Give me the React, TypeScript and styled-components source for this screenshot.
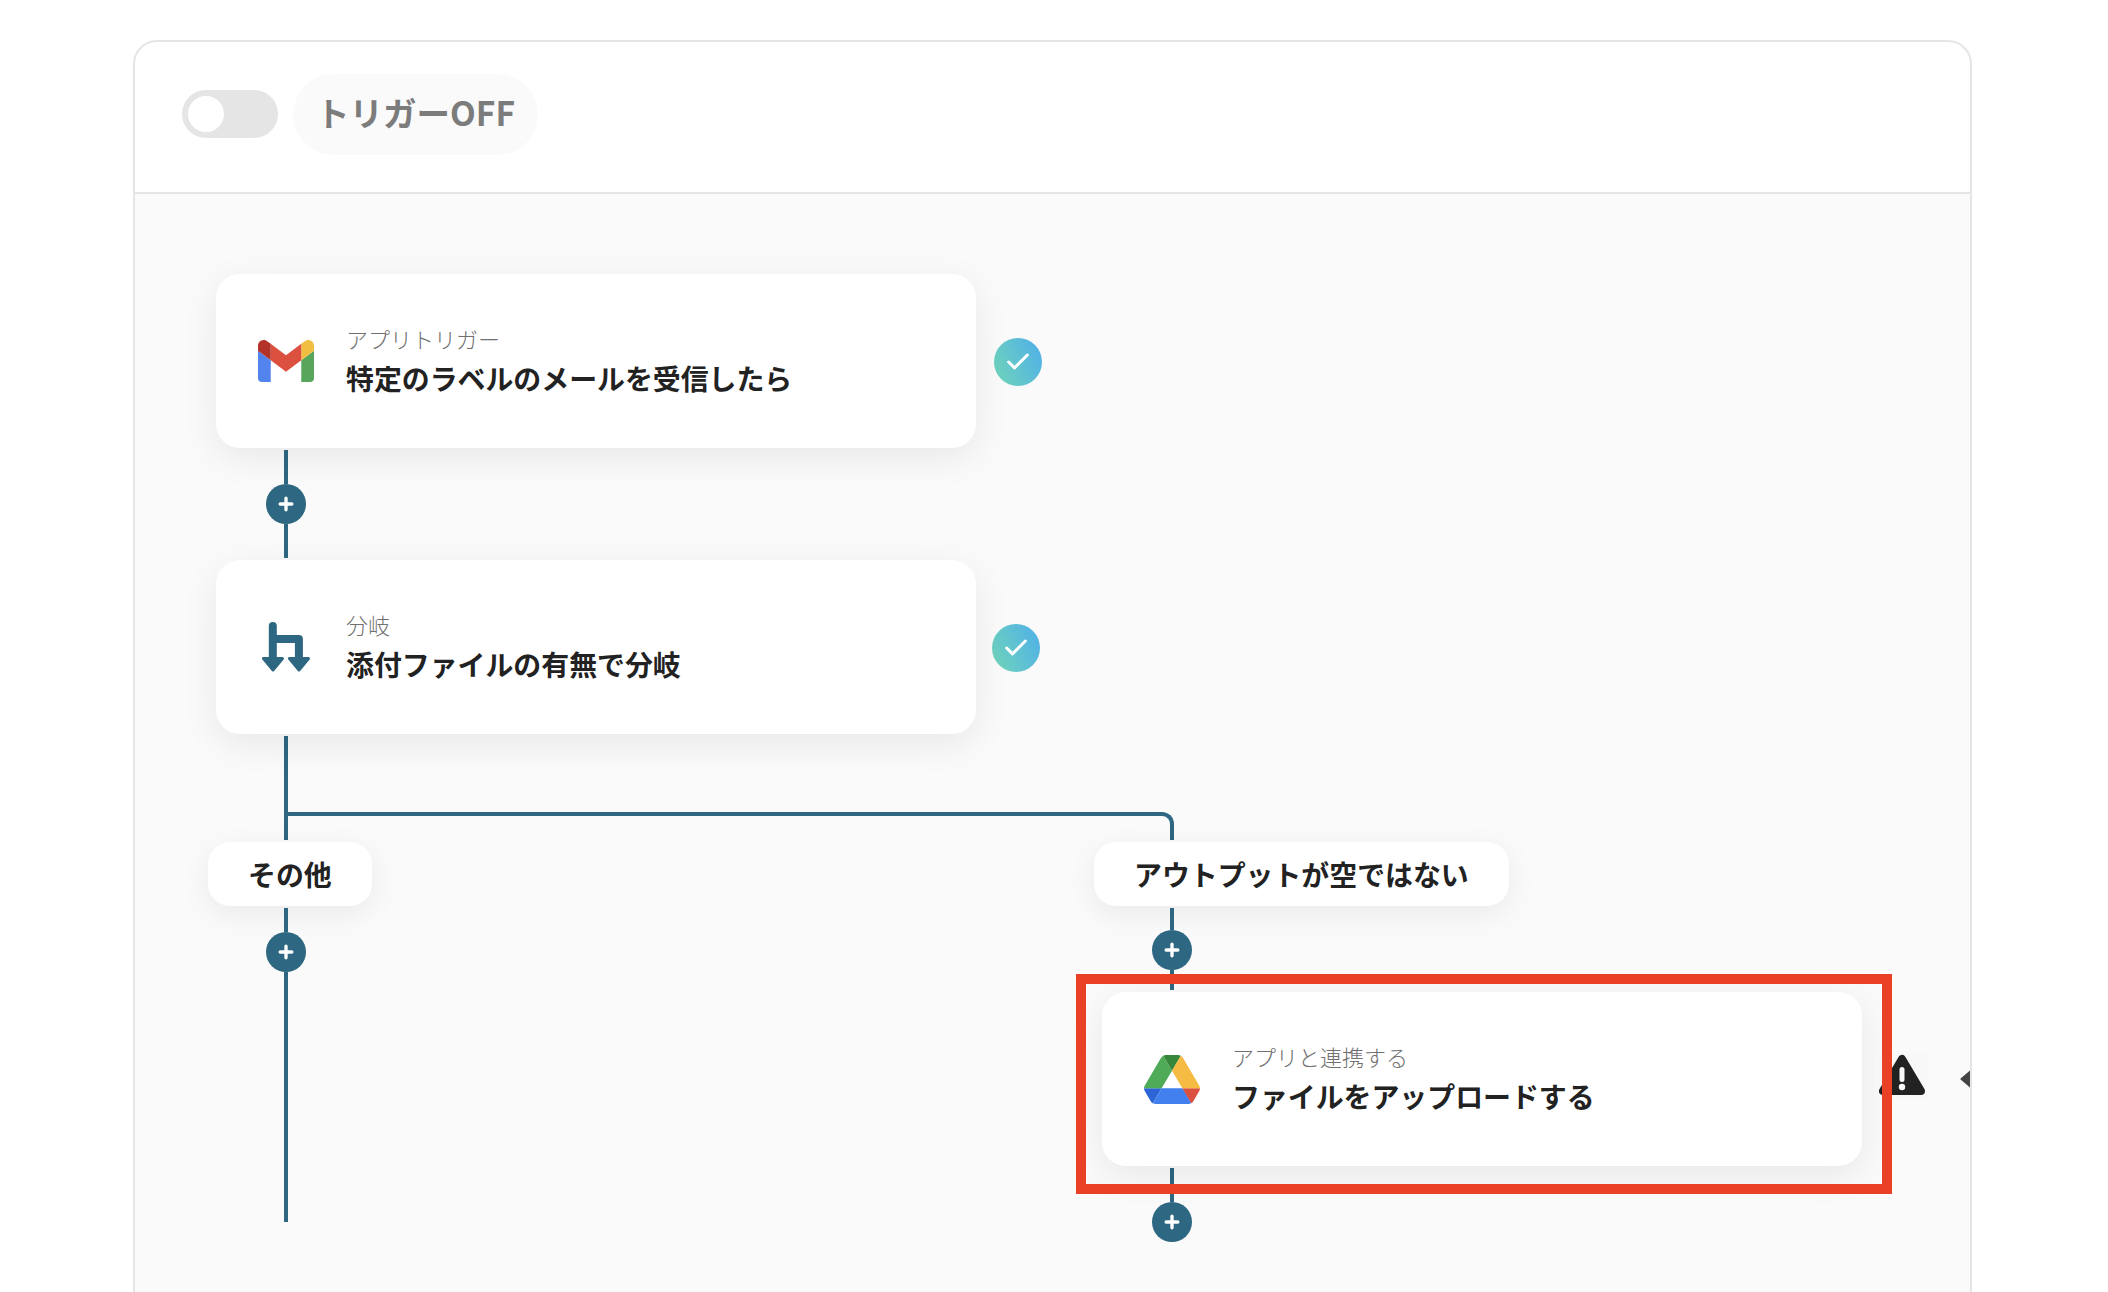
import React from "react";
import styled, { createGlobalStyle } from "styled-components";
import { Check, Plus } from "lucide-react";

const LINE_COLOR = "#2e6781";

const GlobalStyle = createGlobalStyle`
  html, body {
    margin: 0;
    padding: 0;
    background: #ffffff;
  }
  * {
    box-sizing: border-box;
  }
`;

const Page = styled.div`
  width: 2108px;
  height: 1292px;
  padding: 40px 136px 0 133px;
  overflow: hidden;
  font-family: "Noto Sans CJK JP", "Noto Sans", sans-serif;
`;

const Panel = styled.div`
  width: 1839px;
  height: 1320px;
  border: 2px solid #e5e5e5;
  border-radius: 24px;
  overflow: hidden;
  background: #ffffff;
`;

const Header = styled.div`
  height: 152px;
  display: flex;
  align-items: center;
  gap: 15px;
  padding: 0 0 6px 47px;
  border-bottom: 2px solid #e5e5e5;
`;

const Toggle = styled.div`
  width: 96px;
  height: 48px;
  padding: 6px;
  border-radius: 24px;
  background: #e5e5e5;
`;

const ToggleKnob = styled.div`
  width: 36px;
  height: 36px;
  border-radius: 50%;
  background: #ffffff;
`;

const TriggerPill = styled.div`
  width: 245px;
  height: 81px;
  display: flex;
  align-items: center;
  padding: 0 0 5px 23px;
  border-radius: 41px;
  background: #fafafa;
  color: #7c7c7c;
  font-size: 33.5px;
  font-weight: 700;
  white-space: nowrap;
`;

const Canvas = styled.div`
  height: 1200px;
  padding: 80px 0 0 81px;
  background: #fafafa;
`;

const NodeRow = styled.div<{ $indent?: number; $top?: number }>`
  display: flex;
  align-items: center;
  margin-left: ${(p) => p.$indent ?? 0}px;
  margin-top: ${(p) => p.$top ?? 0}px;
`;

const Card = styled.div`
  position: relative;
  flex-shrink: 0;
  width: 760px;
  height: 174px;
  display: flex;
  align-items: center;
  border-radius: 24px;
  background: #ffffff;
  box-shadow: 0 10px 36px rgba(0, 0, 0, 0.075);
`;

const IconSlot = styled.div`
  width: 56px;
  height: 56px;
  margin: 0 32px 0 42px;
  display: flex;
  align-items: center;
  justify-content: center;
  flex-shrink: 0;
`;

const CardText = styled.div`
  display: flex;
  flex-direction: column;
  gap: 4px;
  padding-bottom: 3px;
`;

const CardKind = styled.div`
  font-size: 22px;
  line-height: 32px;
  font-weight: 300;
  color: #707070;
`;

const CardTitle = styled.div`
  font-size: 27.9px;
  line-height: 40px;
  font-weight: 700;
  color: #222222;
`;

const StatusDot = styled.div<{ $gap: number }>`
  width: 48px;
  height: 48px;
  margin: 2px 0 0 ${(p) => p.$gap}px;
  flex-shrink: 0;
  display: flex;
  align-items: center;
  justify-content: center;
  border-radius: 50%;
  color: #ffffff;
  background: linear-gradient(65deg, #72d6b8 0%, #4eaeea 100%);
`;

const Rail = styled.div<{ $indent: number }>`
  width: 40px;
  margin: 2px 0 0 ${(p) => p.$indent}px;
  display: flex;
  flex-direction: column;
  align-items: center;
`;

const Line = styled.div<{ $h: number }>`
  width: 4px;
  height: ${(p) => p.$h}px;
  background: ${LINE_COLOR};
`;

const AddButton = styled.div`
  width: 40px;
  height: 40px;
  flex-shrink: 0;
  display: flex;
  align-items: center;
  justify-content: center;
  border-radius: 50%;
  background: ${LINE_COLOR};
  color: #ffffff;
`;

const Elbow = styled.div`
  width: 890px;
  height: 28px;
  margin-left: 68px;
  border: 4px solid ${LINE_COLOR};
  border-bottom: none;
  border-top-right-radius: 12px;
`;

const Branches = styled.div`
  display: flex;
  margin: 2px 0 0 -8px;
`;

const BranchColumn = styled.div<{ $width: number }>`
  flex: 0 0 ${(p) => p.$width}px;
  width: ${(p) => p.$width}px;
  display: flex;
  flex-direction: column;
  align-items: flex-start;
`;

const BranchLabel = styled.div`
  height: 64px;
  display: flex;
  align-items: center;
  padding: 0 40px;
  border-radius: 22px;
  background: #ffffff;
  box-shadow: 0 8px 30px rgba(0, 0, 0, 0.065);
  font-size: 27.9px;
  font-weight: 700;
  color: #222222;
  white-space: nowrap;
`;

const Highlight = styled.div`
  position: absolute;
  top: -18px;
  left: -26px;
  right: -30px;
  bottom: -28px;
  z-index: 2;
  border: 10px solid #ea4026;
  pointer-events: none;
`;

const WarningBox = styled.div`
  width: 48px;
  height: 46px;
  margin: -8px 0 0 17px;
  flex-shrink: 0;
  background: #f8f8f8;
`;

const Chevron = styled.svg`
  width: 20px;
  height: 20px;
  margin: 0 0 0 33px;
  flex-shrink: 0;
`;

const GmailLogo = () => (
  <svg width="56" height="42" viewBox="52 42 88 66" preserveAspectRatio="none">
    <path fill="#5383ec" d="M58 108h14V74L52 59v43c0 3.32 2.69 6 6 6" />
    <path fill="#58a65c" d="M120 108h14c3.32 0 6-2.69 6-6V59l-20 15" />
    <path fill="#f2be42" d="M120 48v26l20-15v-8c0-7.42-8.47-11.65-14.4-7.2" />
    <path fill="#dc5040" d="M72 74V48l24 18 24-18v26L96 92" />
    <path fill="#b3332a" d="M52 51v8l20 15V48l-5.6-4.2c-5.94-4.45-14.4-.22-14.4 7.2" />
  </svg>
);

const DriveLogo = () => (
  <svg width="56" height="49" viewBox="0 0 87.3 78" preserveAspectRatio="none">
    <path fill="#2d65d6" d="m6.6 66.85 3.85 6.65c.8 1.4 1.95 2.5 3.3 3.3l13.75-23.8h-27.5c0 1.55.4 3.1 1.2 4.5z" />
    <path fill="#4fab58" d="m43.65 25-13.75-23.8c-1.35.8-2.5 1.9-3.3 3.3l-25.4 44a9.06 9.06 0 0 0 -1.2 4.5h27.5z" />
    <path fill="#dc5040" d="m73.55 76.8c1.35-.8 2.5-1.9 3.3-3.3l1.6-2.75 7.65-13.25c.8-1.4 1.2-2.95 1.2-4.5h-27.502l5.852 11.5z" />
    <path fill="#37873a" d="m43.65 25 13.75-23.8c-1.35-.8-2.9-1.2-4.5-1.2h-18.5c-1.6 0-3.15.45-4.5 1.2z" />
    <path fill="#4180ee" d="m59.8 53h-32.3l-13.75 23.8c1.35.8 2.9 1.2 4.5 1.2h50.8c1.6 0 3.15-.45 4.5-1.2z" />
    <path fill="#f5bb42" d="m73.4 26.5-12.7-22c-.8-1.4-1.95-2.5-3.3-3.3l-13.75 23.8 16.15 28h27.45c0-1.55-.4-3.1-1.2-4.5z" />
  </svg>
);

const BranchIcon = () => (
  <svg width="48" height="50" viewBox="0 0 48 50">
    <path d="M10.8 4V38M10.8 17H36.9V38" fill="none" stroke={LINE_COLOR} strokeWidth="8" strokeLinecap="round" strokeLinejoin="round" />
    <path d="M1.5 36.5H20.5L11 48Z" fill={LINE_COLOR} stroke={LINE_COLOR} strokeWidth="3" strokeLinejoin="round" />
    <path d="M27.5 36.5H46.5L37 48Z" fill={LINE_COLOR} stroke={LINE_COLOR} strokeWidth="3" strokeLinejoin="round" />
  </svg>
);

const WarningIcon = () => (
  <svg width="48" height="46" viewBox="0 0 48 46">
    <path d="M23 7 L4 39 H42 Z" fill="#222222" stroke="#222222" strokeWidth="8" strokeLinejoin="round" />
    <rect x="20.5" y="15" width="5" height="15" rx="2.5" fill="#f8f8f8" />
    <circle cx="23" cy="35" r="3.2" fill="#f8f8f8" />
  </svg>
);

const AddNode = () => (
  <AddButton>
    <Plus size={20} strokeWidth={4} />
  </AddButton>
);

const App: React.FC = () => {
  return (
    <Page>
      <GlobalStyle />
      <Panel>
        <Header>
          <Toggle>
            <ToggleKnob />
          </Toggle>
          <TriggerPill>トリガーOFF</TriggerPill>
        </Header>
        <Canvas>
          <NodeRow>
            <Card>
              <IconSlot>
                <GmailLogo />
              </IconSlot>
              <CardText>
                <CardKind>アプリトリガー</CardKind>
                <CardTitle>特定のラベルのメールを受信したら</CardTitle>
              </CardText>
            </Card>
            <StatusDot $gap={18}>
              <Check size={28} strokeWidth={2.6} />
            </StatusDot>
          </NodeRow>
          <Rail $indent={50}>
            <Line $h={34} />
            <AddNode />
            <Line $h={34} />
          </Rail>
          <NodeRow $top={2}>
            <Card>
              <IconSlot>
                <BranchIcon />
              </IconSlot>
              <CardText>
                <CardKind>分岐</CardKind>
                <CardTitle>添付ファイルの有無で分岐</CardTitle>
              </CardText>
            </Card>
            <StatusDot $gap={16}>
              <Check size={28} strokeWidth={2.6} />
            </StatusDot>
          </NodeRow>
          <Rail $indent={50}>
            <Line $h={76} />
          </Rail>
          <Elbow />
          <Branches>
            <BranchColumn $width={886}>
              <BranchLabel>その他</BranchLabel>
              <Rail $indent={58}>
                <Line $h={24} />
                <AddNode />
                <Line $h={250} />
              </Rail>
            </BranchColumn>
            <BranchColumn $width={800}>
              <BranchLabel>アウトプットが空ではない</BranchLabel>
              <Rail $indent={58}>
                <Line $h={22} />
                <AddNode />
                <Line $h={20} />
              </Rail>
              <NodeRow $indent={8} $top={2}>
                <Card>
                  <IconSlot>
                    <DriveLogo />
                  </IconSlot>
                  <CardText>
                    <CardKind>アプリと連携する</CardKind>
                    <CardTitle>ファイルをアップロードする</CardTitle>
                  </CardText>
                  <Highlight />
                </Card>
                <WarningBox>
                  <WarningIcon />
                </WarningBox>
                <Chevron viewBox="0 0 20 20">
                  <path d="M1.5 10 L11 2 V18 Z" fill="#444444" stroke="#444444" strokeWidth="2" strokeLinejoin="round" />
                </Chevron>
              </NodeRow>
              <Rail $indent={58}>
                <Line $h={34} />
                <AddNode />
              </Rail>
            </BranchColumn>
          </Branches>
        </Canvas>
      </Panel>
    </Page>
  );
};

export default App;
